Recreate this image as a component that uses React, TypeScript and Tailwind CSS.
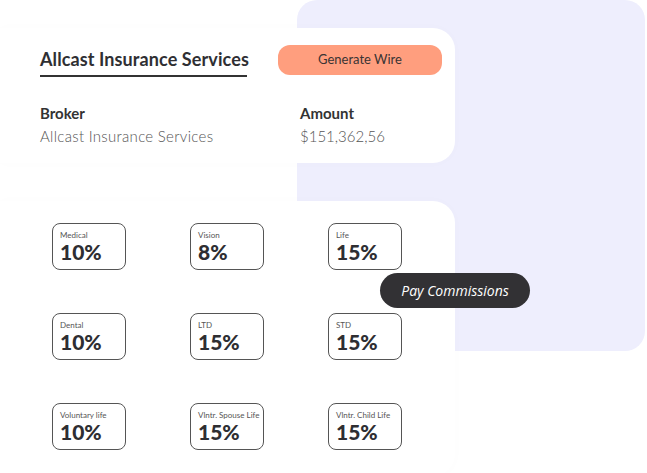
import React from "react";

const rates = [
  { label: "Medical", value: "10%" },
  { label: "Vision", value: "8%" },
  { label: "Life", value: "15%" },
  { label: "Dental", value: "10%" },
  { label: "LTD", value: "15%" },
  { label: "STD", value: "15%" },
  { label: "Voluntary life", value: "10%" },
  { label: "Vlntr. Spouse Life", value: "15%" },
  { label: "Vlntr. Child Life", value: "15%" },
];

function RateTile({ label, value }: { label: string; value: string }) {
  return (
    <div className="w-[74px] h-[47px] border border-[#555] rounded-[8px] pl-[7px] pt-[7px] bg-white flex flex-col gap-[1px]">
      <div className="text-[8px] leading-[9px] text-[#555] whitespace-nowrap">{label}</div>
      <div className="text-[21px] leading-[21px] font-black text-[#2e2e32]">{value}</div>
    </div>
  );
}

export default function App() {
  return (
    <div className="relative w-[647px] h-[473px] overflow-hidden bg-white font-['Lato',sans-serif] text-[#333]">
      {/* faded dashboard behind the cards */}
      <div className="absolute left-[297px] top-0 w-[348px] h-[351px] rounded-[20px] bg-[#eeeefd]" />

      <div className="relative flex flex-col gap-[38px] pt-[28px]">
        <div className="w-[455px] h-[135px] rounded-r-[22px] bg-white shadow-[0_0_12px_rgba(0,0,0,0.015)] pl-[40px] pt-[18px]">
          <div className="flex items-center">
            <div className="border-b-2 border-[#333] pb-[2px] w-[207px]">
              <span className="text-[18px] font-bold text-[#2f2f33] whitespace-nowrap tracking-[0.1px]">
                Allcast Insurance Services
              </span>
            </div>
            <button className="ml-[31px] w-[164px] h-[30px] -mt-[4px] rounded-[12px] bg-[#ff9e7e] text-[13px] text-[#3a3434]">
              Generate Wire
            </button>
          </div>
          <div className="flex mt-[26px]">
            <div className="w-[260px] flex flex-col gap-[3px]">
              <div className="text-[15px] font-bold text-[#333] leading-[20px]">Broker</div>
              <div className="text-[15px] font-light text-[#555] leading-[20px] tracking-[0.3px]">
                Allcast Insurance Services
              </div>
            </div>
            <div className="flex flex-col gap-[3px]">
              <div className="text-[15px] font-bold text-[#333] leading-[20px]">Amount</div>
              <div className="text-[15px] font-light text-[#555] leading-[20px]">$151,362,56</div>
            </div>
          </div>
        </div>

        <div className="w-[455px] h-[275px] rounded-r-[22px] bg-white shadow-[0_0_12px_rgba(0,0,0,0.015)] pl-[52px] pt-[22px]">
          <div className="grid grid-cols-[74px_74px_74px] gap-x-[64px] gap-y-[43px]">
            {rates.map((r) => (
              <RateTile key={r.label} label={r.label} value={r.value} />
            ))}
          </div>
        </div>
      </div>

      <div className="absolute left-[380px] top-[273px] w-[150px] h-[35px] rounded-full bg-[#323134] flex items-center justify-center text-white text-[14px] italic font-['Open_Sans',sans-serif]">
        Pay Commissions
      </div>
    </div>
  );
}
